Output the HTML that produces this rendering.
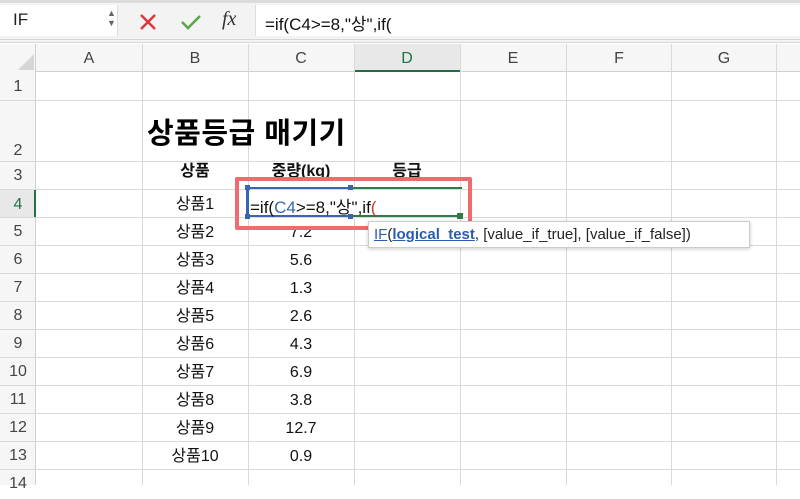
<!DOCTYPE html><html><head><meta charset="utf-8"><style>
*{margin:0;padding:0;box-sizing:border-box}
body{width:800px;height:485px;overflow:hidden;background:#fff;font-family:"Liberation Sans","Noto Sans CJK KR",sans-serif;position:relative;color:#222}
.a{position:absolute}
.vl{position:absolute;top:44px;bottom:0;width:1px;background:#d9d9d9}
.hl{position:absolute;left:0;right:0;height:1px;background:#d9d9d9}
.ch{position:absolute;top:44px;height:28px;line-height:29px;text-align:center;font-size:16px;color:#444;width:106px}
.rh{position:absolute;left:0;width:36px;text-align:center;font-size:16px;color:#444;height:28px;line-height:30px}
.c{position:absolute;width:106px;text-align:center;font-size:16px;height:28px;line-height:32px;color:#111}
</style></head><body>
<div class="a" style="left:0;top:0;width:800px;height:43px;background:#f3f3f3;border-top:3px solid #dcdcdc;border-bottom:4px double #d6d6d6"></div>
<div class="a" style="left:0;top:5px;width:118px;height:31px;background:#fff;border-right:1px solid #ddd"></div>
<div class="a" style="left:13px;top:10px;font-size:17px;color:#222">IF</div>
<div class="a" style="left:107px;top:8px;font-size:9px;color:#666;line-height:10px">▲<br>▼</div>
<svg class="a" style="left:139px;top:13px" width="18" height="18"><path d="M2 2L16 16M16 2L2 16" stroke="#d9393e" stroke-width="2.6"/></svg>
<svg class="a" style="left:180px;top:13px" width="22" height="18"><path d="M2 9L8 15L20 3" stroke="#5aa84a" stroke-width="2.6" fill="none"/></svg>
<div class="a" style="left:222px;top:8px;font-size:20px;font-style:italic;font-family:'Liberation Serif',serif;color:#333">fx</div>
<div class="a" style="left:255px;top:5px;width:545px;height:31px;background:#fff;border-left:1px solid #ddd"></div>
<div class="a" style="left:265px;top:10px;font-size:17px;color:#111">=if(C4&gt;=8,"상",if(</div>
<div class="a" style="left:0;top:44px;width:800px;height:28px;background:#f6f6f6;border-bottom:1px solid #d0d0d0"></div>
<div class="a" style="left:0;top:44px;width:36px;height:441px;background:#f6f6f6;border-right:1px solid #d0d0d0"></div>
<svg class="a" style="left:18px;top:54px" width="16" height="16"><path d="M16 0V16H0Z" fill="#d6d6d6"/></svg>
<div class="a" style="left:355px;top:44px;width:105px;height:28px;background:#e8e8e8;border-bottom:2px solid #1e7145"></div>
<div class="vl" style="left:142px"></div><div class="vl" style="left:248px"></div><div class="vl" style="left:354px"></div><div class="vl" style="left:460px"></div><div class="vl" style="left:566px"></div><div class="vl" style="left:671px"></div><div class="vl" style="left:776px"></div>
<div class="ch" style="left:36px">A</div><div class="ch" style="left:142px">B</div><div class="ch" style="left:248px">C</div><div class="ch" style="left:354px;color:#1e7145">D</div><div class="ch" style="left:460px">E</div><div class="ch" style="left:566px">F</div><div class="ch" style="left:671px">G</div>
<div class="hl" style="top:100px"></div><div class="hl" style="top:161px"></div><div class="hl" style="top:189px"></div><div class="hl" style="top:217px"></div><div class="hl" style="top:245px"></div><div class="hl" style="top:273px"></div><div class="hl" style="top:301px"></div><div class="hl" style="top:329px"></div><div class="hl" style="top:357px"></div><div class="hl" style="top:385px"></div><div class="hl" style="top:413px"></div><div class="hl" style="top:441px"></div><div class="hl" style="top:469px"></div>
<div class="rh" style="top:72px">1</div><div class="rh" style="top:136px">2</div><div class="rh" style="top:161px">3</div>
<div class="a" style="left:0;top:190px;width:36px;height:27px;background:#e8e8e8;border-right:2px solid #1e7145"></div>
<div class="rh" style="top:190px;color:#1e7145">4</div>
<div class="rh" style="top:217px">5</div><div class="rh" style="top:245px">6</div><div class="rh" style="top:273px">7</div><div class="rh" style="top:301px">8</div><div class="rh" style="top:329px">9</div><div class="rh" style="top:357px">10</div><div class="rh" style="top:385px">11</div><div class="rh" style="top:413px">12</div><div class="rh" style="top:441px">13</div><div class="rh" style="top:469px">14</div>
<div class="a" style="left:147px;top:110px;font-size:29px;font-weight:bold;color:#000;letter-spacing:0.5px">상품등급 매기기</div>
<div class="c" style="left:142px;top:158px;line-height:28px;font-weight:bold">상품</div><div class="c" style="left:248px;top:158px;line-height:28px;font-weight:bold">중량(kg)</div><div class="c" style="left:354px;top:158px;line-height:28px;font-weight:bold">등급</div>
<div class="c" style="left:142px;top:189px">상품1</div>
<div class="c" style="left:142px;top:217px">상품2</div><div class="c" style="left:248px;top:217px">7.2</div>
<div class="c" style="left:142px;top:245px">상품3</div><div class="c" style="left:248px;top:245px">5.6</div>
<div class="c" style="left:142px;top:273px">상품4</div><div class="c" style="left:248px;top:273px">1.3</div>
<div class="c" style="left:142px;top:301px">상품5</div><div class="c" style="left:248px;top:301px">2.6</div>
<div class="c" style="left:142px;top:329px">상품6</div><div class="c" style="left:248px;top:329px">4.3</div>
<div class="c" style="left:142px;top:357px">상품7</div><div class="c" style="left:248px;top:357px">6.9</div>
<div class="c" style="left:142px;top:385px">상품8</div><div class="c" style="left:248px;top:385px">3.8</div>
<div class="c" style="left:142px;top:413px">상품9</div><div class="c" style="left:248px;top:413px">12.7</div>
<div class="c" style="left:142px;top:441px">상품10</div><div class="c" style="left:248px;top:441px">0.9</div>
<div class="a" style="left:249px;top:190px;width:210px;height:26px;background:#fff"></div>
<div class="a" style="left:246px;top:187px;width:106px;height:30px;border:2px solid #3a64b0;border-right:none;border-left:none"></div>
<div class="a" style="left:246px;top:186px;width:4px;height:32px;border-left:3px solid #3a64b0"></div>
<div class="a" style="left:352px;top:187px;width:110px;height:30px;border-top:2px solid #2f7a46;border-bottom:2px solid #2f7a46"></div>
<div class="a" style="left:348px;top:185px;width:5px;height:5px;background:#3a64b0"></div><div class="a" style="left:348px;top:214px;width:5px;height:5px;background:#3a64b0"></div><div class="a" style="left:245px;top:214px;width:5px;height:5px;background:#3a64b0"></div><div class="a" style="left:245px;top:185px;width:5px;height:5px;background:#3a64b0"></div>
<div class="a" style="left:457px;top:213px;width:6px;height:6px;background:#2f7a46"></div>
<div class="a" style="left:250px;top:193px;font-size:17px;color:#111">=if(<span style="color:#3a64b0">C4</span>&gt;=8,"상",if<span style="color:#c0392b">(</span></div>
<div class="a" style="left:235px;top:177px;width:237px;height:53px;border:4px solid #ef6b6e;border-radius:2px"></div>
<div class="a" style="left:368px;top:221px;width:382px;height:27px;background:#fff;border:1px solid #ccc;box-shadow:0 1px 4px rgba(0,0,0,.2);font-size:15px;line-height:26px;padding-left:5px;color:#222"><span style="color:#2a5db0;text-decoration:underline">IF</span>(<b style="color:#2a5db0;text-decoration:underline">logical_test</b>, [value_if_true], [value_if_false])</div>
</body></html>
